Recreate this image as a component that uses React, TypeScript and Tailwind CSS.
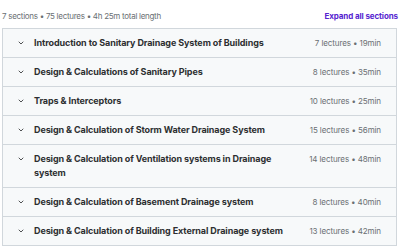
import { ChevronDown } from "lucide-react"

const sections = [
  { title: "Introduction to Sanitary Drainage System of Buildings", meta: "7 lectures • 19min" },
  { title: "Design & Calculations of Sanitary Pipes", meta: "8 lectures • 35min" },
  { title: "Traps & Interceptors", meta: "10 lectures • 25min" },
  { title: "Design & Calculation of Storm Water Drainage System", meta: "15 lectures • 56min" },
  { title: "Design & Calculation of Ventilation systems in Drainage system", meta: "14 lectures • 48min" },
  { title: "Design & Calculation of Basement Drainage system", meta: "8 lectures • 40min" },
  { title: "Design & Calculation of Building External Drainage system", meta: "13 lectures • 42min" },
]

export default function App() {
  return (
    <div className="w-[400px] h-[249px] overflow-hidden bg-white px-[2px] pt-[9px] font-['Inter',sans-serif] text-[#2d2f31]">
      <div className="flex items-center justify-between h-[14px] mb-[5px]">
        <span className="text-[8px] text-[#6a6f73] tracking-[-0.28px]">7 sections • 75 lectures • 4h 25m total length</span>
        <button className="text-[8px] font-bold text-[#5624d0] tracking-[-0.1px]">Expand all sections</button>
      </div>
      <div className="border border-[#d1d7dc] w-[395px]">
        {sections.map((s, i) => (
          <div
            key={s.title}
            className={`flex items-start justify-between bg-[#f7f9fa] pl-[14px] pr-[15px] py-[7px] ${i > 0 ? "border-t border-[#d1d7dc]" : ""}`}
          >
            <div className="flex items-start gap-[9px]">
              <ChevronDown className="w-[8px] h-[8px] mt-[3px] text-[#2d2f31]" strokeWidth={2.5} />
              <span className="text-[9px] font-bold leading-[14px] max-w-[255px] tracking-[-0.1px]">{s.title}</span>
            </div>
            <span className="text-[8px] text-[#6a6f73] leading-[14px] whitespace-nowrap tracking-[-0.1px]">{s.meta}</span>
          </div>
        ))}
      </div>
    </div>
  )
}
